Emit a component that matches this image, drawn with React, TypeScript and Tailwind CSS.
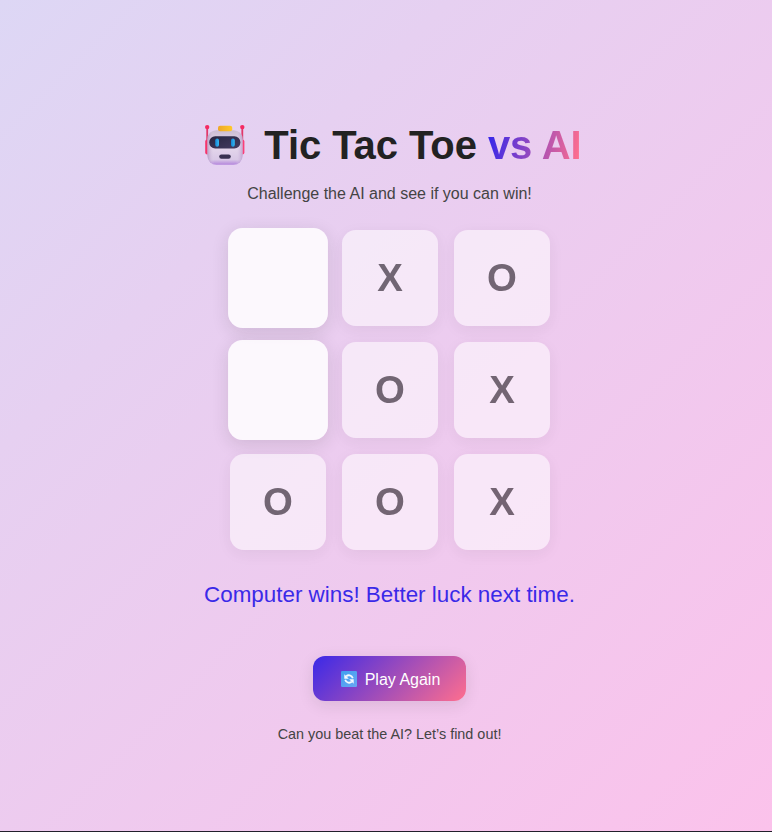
import React from "react";

type Cell = "X" | "O" | null;

const cells: Cell[] = [null, "X", "O", null, "O", "X", "O", "O", "X"];

function Robot() {
  return (
    <svg viewBox="0 0 40 42" className="h-[42px] w-[40px] shrink-0" aria-hidden="true">
      <defs>
        <linearGradient id="head" x1="0" y1="0" x2="0" y2="1">
          <stop offset="0" stopColor="#cbbdd3" />
          <stop offset="0.45" stopColor="#e6d9ec" />
          <stop offset="0.85" stopColor="#d9c8e6" />
          <stop offset="1" stopColor="#b384dc" />
        </linearGradient>
        <linearGradient id="side" x1="0" y1="0" x2="1" y2="0">
          <stop offset="0" stopColor="#9d80b2" stopOpacity="0.6" />
          <stop offset="0.2" stopColor="#e9dcf0" stopOpacity="0" />
          <stop offset="0.8" stopColor="#e9dcf0" stopOpacity="0" />
          <stop offset="1" stopColor="#a987c0" stopOpacity="0.6" />
        </linearGradient>
        <linearGradient id="visor" x1="0" y1="0" x2="1" y2="1">
          <stop offset="0" stopColor="#282640" />
          <stop offset="1" stopColor="#443b62" />
        </linearGradient>
        <linearGradient id="hat" x1="0" y1="0" x2="1" y2="0">
          <stop offset="0" stopColor="#eea72a" />
          <stop offset="1" stopColor="#ffc928" />
        </linearGradient>
        <linearGradient id="eye" x1="0" y1="0" x2="1" y2="0">
          <stop offset="0" stopColor="#1685d4" />
          <stop offset="1" stopColor="#35b9f3" />
        </linearGradient>
      </defs>
      <path d="M2.2 3v15M37.3 3v15" stroke="#e0386a" strokeWidth="1.8" />
      <circle cx="2.2" cy="3.1" r="2.2" fill="#f52a62" />
      <circle cx="37.3" cy="3.1" r="2.2" fill="#f52a62" />
      <rect x="0.2" y="15.4" width="5" height="15.2" rx="2" fill="#f5346c" />
      <rect x="34.4" y="15.4" width="5" height="15.2" rx="2" fill="#fb3f78" />
      <rect x="2.4" y="6.2" width="35.2" height="34.6" rx="9" fill="url(#head)" />
      <rect x="2.4" y="6.2" width="35.2" height="34.6" rx="9" fill="url(#side)" />
      <rect x="13" y="1.8" width="14.2" height="5.4" rx="2" fill="url(#hat)" />
      <rect x="4.2" y="12.3" width="31.2" height="12.2" rx="6" fill="url(#visor)" />
      <rect x="10.2" y="14.5" width="3.8" height="8.2" rx="1.9" fill="url(#eye)" />
      <rect x="26" y="14.5" width="3.8" height="8.2" rx="1.9" fill="url(#eye)" />
      <rect x="14.2" y="30.4" width="11.6" height="4.4" rx="2.2" fill="#393150" />
    </svg>
  );
}

function Refresh() {
  return (
    <svg viewBox="0 0 16 16" className="mb-0.5 size-4 shrink-0" aria-hidden="true">
      <defs>
        <linearGradient id="tile" x1="0" y1="0" x2="1" y2="1">
          <stop offset="0" stopColor="#3fa0ef" />
          <stop offset="1" stopColor="#6aa5f4" />
        </linearGradient>
      </defs>
      <rect width="16" height="16" rx="1.2" fill="url(#tile)" />
      <path
        d="M5.2 5.3C7 3.5 10.8 3.9 11.8 7.3M10.8 10.7C9 12.5 5.2 12.1 4.2 8.7"
        fill="none"
        stroke="#f4f8ff"
        strokeWidth="1.8"
      />
      <path d="M3.3 3.2v4.5h4.5zM12.7 12.8V8.3H8.2z" fill="#f4f8ff" />
    </svg>
  );
}

export default function App() {
  return (
    <main className="h-[832px] w-[772px] overflow-hidden border-b border-[#22202b] bg-[linear-gradient(135deg,#ddd7f5_0%,#e6d0f1_28%,#fbc2eb_100%)] font-['Liberation_Sans',Arial,sans-serif] text-[#222222]">
      <div className="flex flex-col items-center pt-[121px] pl-[7px]">
        <h1 className="ml-2 flex h-12 items-center text-[40px] leading-[48px] font-bold tracking-[-0.08px] whitespace-pre">
          <Robot />
          <span className="pl-[19px]">Tic Tac Toe </span>
          <span className="bg-[linear-gradient(100deg,#3a29e8_5%,#ff6e8e_95%)] bg-clip-text text-transparent">vs AI</span>
        </h1>
        <p className="mt-[13px] h-6 text-[16px] leading-6 text-[#444444]">Challenge the AI and see if you can win!</p>
        <div className="mt-6 ml-px grid grid-cols-3 gap-4">
          {cells.map((cell, i) => (
            <button
              key={i}
              disabled={cell !== null}
              className={
                cell
                  ? "flex size-24 items-center justify-center rounded-[14px] bg-white/90 text-[38.4px] leading-none font-bold text-[#222222] opacity-60 shadow-[0_4px_16px_rgba(34,34,34,0.1)]"
                  : "size-24 scale-[1.04] rounded-[14px] bg-white/85 shadow-[0_4px_16px_rgba(34,34,34,0.12)]"
              }
            >
              {cell}
            </button>
          ))}
        </div>
        <p className="mt-[33px] h-6 text-[22.4px] leading-6 whitespace-nowrap text-[#3a29e8]">
          Computer wins! Better luck next time.
        </p>
        <button className="mt-[49px] flex h-[45px] w-[153px] items-center justify-center gap-2 rounded-xl bg-[linear-gradient(135deg,#3a29e8,#ff6e8e)] pt-0.5 pl-[2px] text-[16px] text-white shadow-[0_4px_16px_rgba(34,34,34,0.1)]">
          <Refresh />
          <span>Play Again</span>
        </button>
        <p className="mt-[23px] text-[14.4px] leading-5 text-[#444444]">Can you beat the AI? Let’s find out!</p>
      </div>
    </main>
  );
}
